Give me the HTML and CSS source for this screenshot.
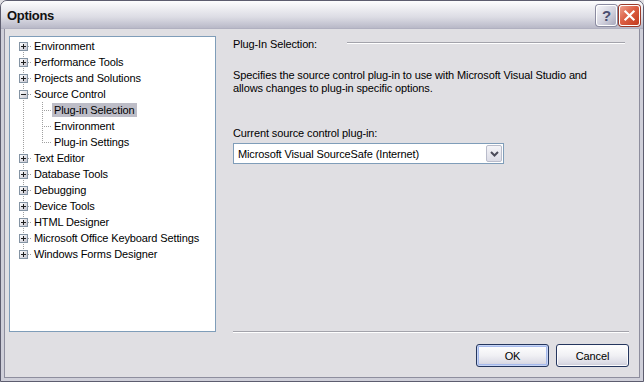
FILE: index.html
```html
<!DOCTYPE html>
<html lang="en">
<head>
    <meta charset="UTF-8">
    <title>Options</title>
    <link rel="stylesheet" href="styles.css">
</head>
<body>
    <div class="window">
        <div class="titlebar">
            <span class="title">Options</span>
            <div class="caption-buttons">
                <span class="cap-btn help">?</span>
                <span class="cap-btn close">
                    <svg width="21" height="21" viewBox="0 0 21 21">
                        <path d="M6 6 L15 15 M15 6 L6 15" stroke="#fff" stroke-width="2.4" stroke-linecap="square" fill="none"/>
                    </svg>
                </span>
            </div>
        </div>

        <div class="body">
            <div class="main">
                <div class="tree">
                    <div class="row"><span class="gut root first"><span class="box plus"></span></span><span class="label">Environment</span></div>
                    <div class="row"><span class="gut root"><span class="box plus"></span></span><span class="label">Performance Tools</span></div>
                    <div class="row"><span class="gut root"><span class="box plus"></span></span><span class="label">Projects and Solutions</span></div>
                    <div class="row"><span class="gut root"><span class="box minus"></span></span><span class="label">Source Control</span></div>
                    <div class="row"><span class="gut pass"></span><span class="gut child"></span><span class="label selected">Plug-in Selection</span></div>
                    <div class="row"><span class="gut pass"></span><span class="gut child"></span><span class="label">Environment</span></div>
                    <div class="row"><span class="gut pass"></span><span class="gut child last"></span><span class="label">Plug-in Settings</span></div>
                    <div class="row"><span class="gut root"><span class="box plus"></span></span><span class="label">Text Editor</span></div>
                    <div class="row"><span class="gut root"><span class="box plus"></span></span><span class="label">Database Tools</span></div>
                    <div class="row"><span class="gut root"><span class="box plus"></span></span><span class="label">Debugging</span></div>
                    <div class="row"><span class="gut root"><span class="box plus"></span></span><span class="label">Device Tools</span></div>
                    <div class="row"><span class="gut root"><span class="box plus"></span></span><span class="label">HTML Designer</span></div>
                    <div class="row"><span class="gut root"><span class="box plus"></span></span><span class="label">Microsoft Office Keyboard Settings</span></div>
                    <div class="row"><span class="gut root last"><span class="box plus"></span></span><span class="label">Windows Forms Designer</span></div>
                </div>

                <div class="page">
                    <div class="page-header">
                        <span>Plug-In Selection:</span>
                        <span class="rule"></span>
                    </div>
                    <p class="desc">Specifies the source control plug-in to use with Microsoft Visual Studio and<br>allows changes to plug-in specific options.</p>
                    <label class="field-label">Current source control plug-in:</label>
                    <div class="combo">
                        <span class="combo-value">Microsoft Visual SourceSafe (Internet)</span>
                        <span class="combo-btn">
                            <svg width="9" height="6" viewBox="0 0 9 6">
                                <path d="M1 1 L4.5 4.5 L8 1" stroke="#4b4b5a" stroke-width="2" fill="none"/>
                            </svg>
                        </span>
                    </div>
                </div>
            </div>

            <div class="footer">
                <button class="btn default">OK</button>
                <button class="btn">Cancel</button>
            </div>
        </div>
    </div>
</body>
</html>
```
FILE: styles.css
```css
body {
    margin: 0;
    font-family: 'Liberation Sans', Arial, sans-serif;
    font-size: 11px;
    letter-spacing: -0.12px;
    color: #000;
    background-color: #e0dfe3;
}

.window {
    width: 644px;
    height: 382px;
    box-sizing: border-box;
    border: 1px solid #5d5d6f;
    border-radius: 7px 7px 0 0;
    overflow: hidden;
    display: flex;
    flex-direction: column;
    background-color: #e0dfe3;
}

/* title bar */
.titlebar {
    height: 28px;
    flex: none;
    display: flex;
    justify-content: space-between;
    align-items: flex-start;
    padding: 4px 3px 0 6px;
    box-sizing: border-box;
    background: linear-gradient(#fdfdfe 0%, #efeff3 25%, #dcdce4 60%, #b9b9c8 100%);
    border-bottom: 1px solid #b0b0c0;
}

.title {
    font-weight: bold;
    font-size: 13px;
    line-height: 21px;
    color: #111;
    letter-spacing: -0.3px;
}

.caption-buttons {
    display: flex;
    gap: 2px;
}

.cap-btn {
    width: 21px;
    height: 21px;
    box-sizing: border-box;
    border: 1px solid #fff;
    border-radius: 3px;
    display: flex;
    align-items: center;
    justify-content: center;
}

.help {
    background: linear-gradient(135deg, #f4f4f8 0%, #d2d2de 55%, #a9a9bd 100%);
    box-shadow: 0 0 0 1px #8b8ba0;
    color: #4a4e70;
    font-weight: bold;
    font-size: 15px;
}

.close {
    background: linear-gradient(135deg, #eda08e 0%, #dc5f44 45%, #c23a1d 100%);
    box-shadow: 0 0 0 1px #9a3a2a;
}

/* dialog body */
.body {
    flex: 1;
    display: flex;
    flex-direction: column;
    border: solid #cfcfd9;
    border-width: 0 3px 3px;
    box-shadow: inset 1px 0 #8e8e9e, inset -1px 0 #8e8e9e, inset 0 -1px #8e8e9e;
    padding: 7px 11px 11px 5px;
}

.main {
    display: flex;
}

/* tree */
.tree {
    width: 207px;
    height: 296px;
    box-sizing: border-box;
    border: 1px solid #7f9db9;
    background-color: #fff;
    padding-top: 1px;
    flex: none;
}

.row {
    display: flex;
    align-items: center;
    height: 16px;
}

.gut {
    width: 22px;
    height: 16px;
    flex: none;
    display: flex;
    align-items: center;
    background-repeat: no-repeat;
}

.gut.root {
    background-image:
        repeating-linear-gradient(to bottom, #a0a0a0 0 1px, transparent 1px 2px),
        repeating-linear-gradient(to right, #a0a0a0 0 1px, transparent 1px 2px);
    background-position: 13px 0, 18px 8px;
    background-size: 1px 16px, 4px 1px;
}

.gut.root.first {
    background-position: 13px 8px, 18px 8px;
    background-size: 1px 8px, 4px 1px;
}

.gut.root.last {
    background-size: 1px 8px, 4px 1px;
}

.gut.pass {
    background-image: repeating-linear-gradient(to bottom, #a0a0a0 0 1px, transparent 1px 2px);
    background-position: 13px 0;
    background-size: 1px 16px;
}

.gut.child {
    width: 20px;
    background-image:
        repeating-linear-gradient(to bottom, #a0a0a0 0 1px, transparent 1px 2px),
        repeating-linear-gradient(to right, #a0a0a0 0 1px, transparent 1px 2px);
    background-position: 10px 0, 10px 8px;
    background-size: 1px 16px, 10px 1px;
}

.gut.child.last {
    background-size: 1px 8px, 10px 1px;
}

.box {
    width: 9px;
    height: 9px;
    margin-left: 9px;
    margin-top: 1px;
    box-sizing: border-box;
    border: 1px solid #8494a4;
    background-repeat: no-repeat;
}

.box.plus {
    background-image:
        linear-gradient(#1e1e1e, #1e1e1e),
        linear-gradient(#1e1e1e, #1e1e1e),
        linear-gradient(135deg, #ffffff, #c4c4ce);
    background-position: center, center, 0 0;
    background-size: 5px 1px, 1px 5px, 100% 100%;
}

.box.minus {
    background-image:
        linear-gradient(#1e1e1e, #1e1e1e),
        linear-gradient(135deg, #ffffff, #c4c4ce);
    background-position: center, 0 0;
    background-size: 5px 1px, 100% 100%;
}

.label {
    padding: 0 2px;
    line-height: 14px;
    white-space: nowrap;
}

.label.selected {
    background-color: #bdbdc7;
}

/* property page */
.page {
    flex: 1;
    margin-left: 17px;
    display: flex;
    flex-direction: column;
    border-bottom: 1px solid #a3a3ab;
    box-shadow: 0 1px #ffffff;
}

.page-header {
    display: flex;
    align-items: flex-start;
    line-height: 14px;
    margin-top: 1px;
}

.rule {
    flex: 1;
    margin: 5px 4px 0 30px;
    border-top: 1px solid #a3a3ab;
    border-bottom: 1px solid #ffffff;
}

.desc {
    margin: 18px 0 0;
    line-height: 13px;
}

.field-label {
    display: block;
    margin: 32px 0 3px;
    line-height: 13px;
}

.combo {
    width: 271px;
    height: 21px;
    box-sizing: border-box;
    border: 1px solid #7f9db9;
    background-color: #fff;
    display: flex;
    align-items: center;
    padding: 1px;
}

.combo-value {
    flex: 1;
    padding-left: 3px;
}

.combo-btn {
    width: 16px;
    height: 17px;
    box-sizing: border-box;
    border: 1px solid #b9bccb;
    border-radius: 2px;
    background: linear-gradient(#f4f4f8, #dcdce6);
    display: flex;
    align-items: center;
    justify-content: center;
}

/* buttons */
.footer {
    display: flex;
    justify-content: flex-end;
    gap: 7px;
    padding-top: 12px;
}

.btn {
    width: 73px;
    height: 23px;
    font-family: inherit;
    font-size: 11px;
    letter-spacing: inherit;
    color: #000;
    border: 1px solid #25365e;
    border-radius: 3px;
    background: linear-gradient(#ffffff 0%, #f0f0f4 50%, #dcdce6 85%, #c9c9d6 100%);
    box-shadow: inset 0 0 0 1px #fcfcfe;
    padding: 0;
}

.btn.default {
    box-shadow: inset 0 0 0 1px #c7d5f5, inset 0 0 0 2px #a5b9ec;
}
```
